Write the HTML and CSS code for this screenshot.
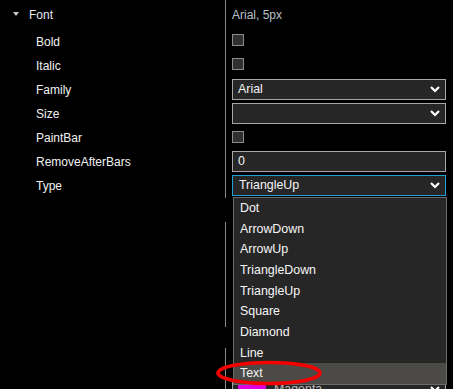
FILE: index.html
```
<!DOCTYPE html>
<html>
  <head>
    <title>Properties</title>
    <link rel="stylesheet" href="styles.css">
  </head>
  <body>
    <div class="grid">
      <div class="row head">
        <div class="name"><span class="caret"></span>Font</div>
        <div class="value summary">Arial, 5px</div>
      </div>
      <div class="row">
        <div class="name sub">Bold</div>
        <div class="value"><span class="check"></span></div>
      </div>
      <div class="row">
        <div class="name sub">Italic</div>
        <div class="value"><span class="check"></span></div>
      </div>
      <div class="row">
        <div class="name sub">Family</div>
        <div class="value">
          <div class="field select">Arial
            <svg class="chev" width="10" height="7" viewBox="0 0 10 7"><polyline points="1,1 5,5 9,1"/></svg>
          </div>
        </div>
      </div>
      <div class="row">
        <div class="name sub">Size</div>
        <div class="value">
          <div class="field select">
            <svg class="chev" width="10" height="7" viewBox="0 0 10 7"><polyline points="1,1 5,5 9,1"/></svg>
          </div>
        </div>
      </div>
      <div class="row">
        <div class="name sub">PaintBar</div>
        <div class="value"><span class="check low"></span></div>
      </div>
      <div class="row">
        <div class="name sub">RemoveAfterBars</div>
        <div class="value"><div class="field">0</div></div>
      </div>
      <div class="row">
        <div class="name sub">Type</div>
        <div class="value">
          <div class="field select focus">TriangleUp
            <svg class="chev" width="10" height="7" viewBox="0 0 10 7"><polyline points="1,1 5,5 9,1"/></svg>
          </div>
        </div>
      </div>
      <!-- rows hidden under the open list -->
      <div class="row blank nodiv"><div class="name"></div><div class="value"></div></div>
      <div class="row blank tall"><div class="name"></div><div class="value"></div></div>
      <div class="row blank gap nodiv"><div class="name"></div><div class="value"></div></div>
      <div class="row blank last">
        <div class="name"></div>
        <div class="value">
          <div class="field select colour"><span class="swatch"></span>Magenta
            <svg class="chev" width="10" height="7" viewBox="0 0 10 7"><polyline points="1,1 5,5 9,1"/></svg>
          </div>
        </div>
      </div>
    </div>

    <ul class="list">
      <li>Dot</li>
      <li>ArrowDown</li>
      <li>ArrowUp</li>
      <li>TriangleDown</li>
      <li>TriangleUp</li>
      <li>Square</li>
      <li>Diamond</li>
      <li>Line</li>
      <li class="hover">Text</li>
    </ul>

    <svg class="mark" width="112" height="30" viewBox="0 0 112 30">
      <ellipse cx="55" cy="14" rx="51" ry="10.5"/>
    </svg>
  </body>
</html>
```

FILE: styles.css
```
* {
    margin: 0;
    padding: 0;
    box-sizing: border-box;
}
html, body {
    width: 453px;
    height: 389px;
    overflow: hidden;
    background: #000;
}
body {
    position: relative;
    font: 12px "Liberation Sans", Arial, sans-serif;
    color: #f2f2f2;
}
.row {
    display: grid;
    grid-template-columns: 226px 1fr;
    height: 24px;
}
.row.head {
    height: 30px;
}
.name {
    border-right: 1px solid #8a8a8a;
    line-height: 24px;
    white-space: nowrap;
}
.head .name {
    line-height: 30px;
    padding-left: 13px;
    color: #e4e8f0;
}
.name.sub {
    padding-left: 36px;
}
.caret {
    display: inline-block;
    width: 0;
    height: 0;
    border-left: 3.5px solid transparent;
    border-right: 3.5px solid transparent;
    border-top: 4px solid #c8c8c8;
    margin-right: 10px;
    vertical-align: 3px;
}
.value {
    padding: 0 7px 0 6px;
}
.summary {
    line-height: 30px;
    color: #b9c0c8;
}
.check {
    display: block;
    width: 12px;
    height: 12px;
    margin-top: 4px;
    border: 1px solid #8c8c8c;
    background: #303030;
}
.check.low {
    margin-top: 5px;
}
.field {
    position: relative;
    height: 21px;
    margin-top: 1px;
    border: 1px solid #a6a6a6;
    background: #262626;
    line-height: 19px;
    padding-left: 5px;
    color: #f4f4f4;
    font-size: 12.4px;
}
.field.focus {
    border-color: #1f9fd2;
    padding-left: 6px;
}
.chev {
    position: absolute;
    right: 5px;
    top: 6px;
}
.chev polyline {
    fill: none;
    stroke: #fff;
    stroke-width: 2.2;
}
.row.nodiv .name {
    border-right-color: transparent;
}
.row.blank {
    height: 24px;
}
.row.tall {
    height: 105px;
}
.row.gap {
    height: 21px;
}
.row.last {
    height: 60px;
}
.colour {
    margin-top: 31px;
    color: #bbb;
}
.swatch {
    display: inline-block;
    width: 28px;
    height: 12px;
    background: #e000e0;
    margin-right: 8px;
    vertical-align: -2px;
}
.list {
    position: absolute;
    left: 233px;
    top: 197px;
    width: 214px;
    height: 188px;
    list-style: none;
    background: #262626;
    border: 1px solid #6a6a6a;
    font-size: 12.4px;
}
.list li {
    height: 20.66px;
    line-height: 21.5px;
    padding-left: 6px;
    color: #f6f6f6;
}
.list li.hover {
    background: #4b4a46;
}
.mark {
    position: absolute;
    left: 214px;
    top: 359px;
}
.mark ellipse {
    fill: none;
    stroke: #f40000;
    stroke-width: 3.6;
}
```
